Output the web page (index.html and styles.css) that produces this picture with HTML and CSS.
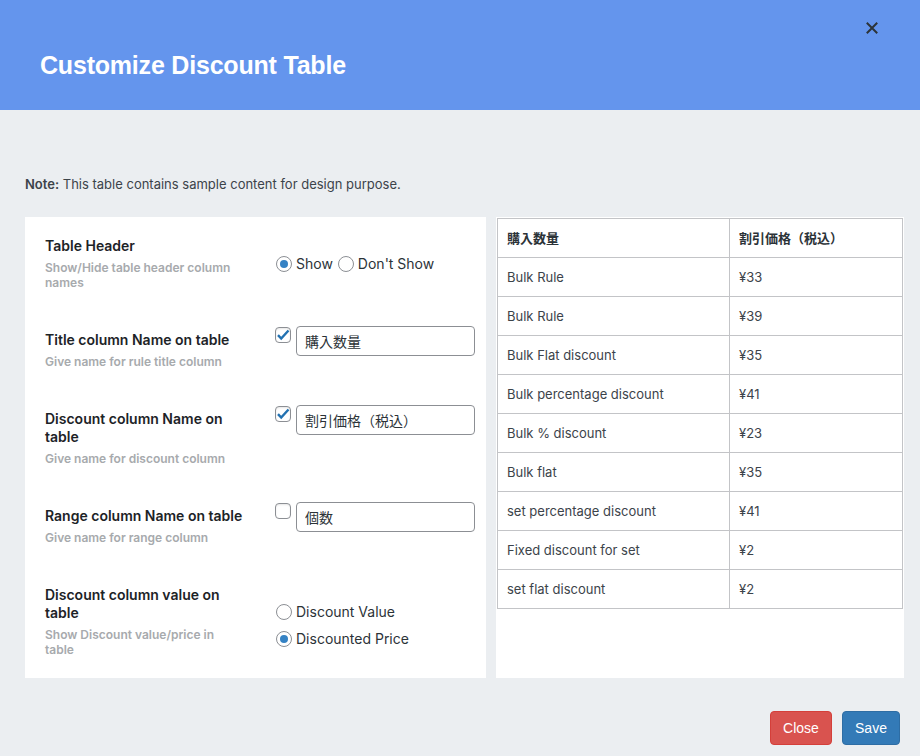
FILE: index.html
```html
<!DOCTYPE html>
<html lang="en">
<head>
<meta charset="utf-8">
<title>Customize Discount Table</title>
<link rel="stylesheet" href="styles.css">
</head>
<body>
<div class="modal">
  <header class="modal-header">
    <h1 class="modal-title">Customize Discount Table</h1>
    <span class="close-x" aria-label="Close">
      <svg width="12" height="12" viewBox="0 0 12 12"><path d="M1.5 1.5L10.5 10.5M10.5 1.5L1.5 10.5" stroke="#2c3338" stroke-width="2" stroke-linecap="square"/></svg>
    </span>
  </header>
  <main class="modal-body">
    <p class="note"><strong>Note:</strong> This table contains sample content for design purpose.</p>
    <div class="panels">
      <section class="settings">
        <div class="row row-center">
          <div class="label-col">
            <div class="label">Table Header</div>
            <div class="desc">Show/Hide table header column names</div>
          </div>
          <div class="control-col">
            <span class="choice"><span class="radio checked"></span>Show</span>
            <span class="choice"><span class="radio"></span>Don't Show</span>
          </div>
        </div>
        <div class="row row-top">
          <div class="label-col">
            <div class="label">Title column Name on table</div>
            <div class="desc">Give name for rule title column</div>
          </div>
          <div class="control-col field">
            <span class="checkbox checked"><svg width="14" height="12" viewBox="0 0 14 12"><path d="M2 6.2l3.2 3.3L12.5 1.5" fill="none" stroke="#2271b1" stroke-width="2.4"/></svg></span>
            <input class="text-input" type="text" value="購入数量">
          </div>
        </div>
        <div class="row row-top">
          <div class="label-col">
            <div class="label">Discount column Name on table</div>
            <div class="desc">Give name for discount column</div>
          </div>
          <div class="control-col field">
            <span class="checkbox checked"><svg width="14" height="12" viewBox="0 0 14 12"><path d="M2 6.2l3.2 3.3L12.5 1.5" fill="none" stroke="#2271b1" stroke-width="2.4"/></svg></span>
            <input class="text-input" type="text" value="割引価格（税込）">
          </div>
        </div>
        <div class="row row-top">
          <div class="label-col">
            <div class="label">Range column Name on table</div>
            <div class="desc">Give name for range column</div>
          </div>
          <div class="control-col field">
            <span class="checkbox"></span>
            <input class="text-input" type="text" value="個数">
          </div>
        </div>
        <div class="row row-center">
          <div class="label-col">
            <div class="label">Discount column value on table</div>
            <div class="desc">Show Discount value/price in table</div>
          </div>
          <div class="control-col stack">
            <span class="choice"><span class="radio"></span>Discount Value</span>
            <span class="choice"><span class="radio checked"></span>Discounted Price</span>
          </div>
        </div>
      </section>
      <section class="preview">
        <table class="discount-table">
          <thead>
            <tr><th>購入数量</th><th>割引価格（税込）</th></tr>
          </thead>
          <tbody>
            <tr><td>Bulk Rule</td><td>¥33</td></tr>
            <tr><td>Bulk Rule</td><td>¥39</td></tr>
            <tr><td>Bulk Flat discount</td><td>¥35</td></tr>
            <tr><td>Bulk percentage discount</td><td>¥41</td></tr>
            <tr><td>Bulk % discount</td><td>¥23</td></tr>
            <tr><td>Bulk flat</td><td>¥35</td></tr>
            <tr><td>set percentage discount</td><td>¥41</td></tr>
            <tr><td>Fixed discount for set</td><td>¥2</td></tr>
            <tr><td>set flat discount</td><td>¥2</td></tr>
          </tbody>
        </table>
      </section>
    </div>
  </main>
  <footer class="modal-footer">
    <button class="btn btn-close" type="button">Close</button>
    <button class="btn btn-save" type="button">Save</button>
  </footer>
</div>
</body>
</html>
```

FILE: styles.css
```css
* { box-sizing: border-box; }
html, body { margin: 0; padding: 0; }
body {
  background: #ebeef1;
  font-family: "Inter", "Noto Sans CJK JP", sans-serif;
  color: #3c434a;
  font-size: 13px;
  width: 920px;
  height: 756px;
  overflow: hidden;
}
.modal { width: 920px; height: 756px; display: flex; flex-direction: column; }

.modal-header {
  height: 110px;
  background: #6495ed;
  position: relative;
  display: flex;
  align-items: center;
  padding-left: 40px;
  padding-top: 21px;
}
.modal-title {
  margin: 0;
  font-family: "Liberation Sans", Arial, sans-serif;
  font-weight: 700;
  font-size: 25px;
  letter-spacing: -0.2px;
  color: #fff;
}
.close-x {
  position: absolute;
  top: 22px;
  left: 866px;
  width: 12px;
  height: 12px;
  display: block;
}
.close-x svg { display: block; }

.modal-body { padding: 0 16px 0 25px; }
.note {
  margin: 65px 0 24px;
  line-height: 18px;
  font-size: 13px;
  color: #3c434a;
}
.note strong { font-weight: 600; }

.panels { display: flex; gap: 10px; align-items: stretch; }
.settings {
  width: 461px;
  background: #fff;
  padding: 20px 11px 21px 20px;
}
.preview {
  width: 408px;
  background: #fff;
  padding: 1px;
}

.row { display: flex; }
.row + .row { margin-top: 41px; }
.row-center { align-items: center; }
.row-top { align-items: flex-start; }
.label-col { width: 230px; padding-right: 24px; }
.label {
  font-size: 14px;
  font-weight: 600;
  line-height: 18px;
  color: #1d2327;
}
.desc {
  margin-top: 5px;
  max-width: 192px;
  font-size: 12px;
  font-weight: 600;
  line-height: 15px;
  color: #a7aaad;
}
.control-col { width: 200px; display: flex; align-items: center; }
.control-col.field { margin-top: -5px; gap: 5px; align-items: flex-start; }
.control-col.stack { flex-direction: column; align-items: flex-start; gap: 9px; padding-top: 7px; }

.choice {
  display: inline-flex;
  align-items: center;
  font-size: 14px;
  line-height: 18px;
  color: #2c3338;
  margin-right: 4px;
}
.radio {
  width: 16px;
  height: 16px;
  border: 1px solid #8c8f94;
  border-radius: 50%;
  background: #fff;
  margin: 0 4px 0 1px;
  display: inline-flex;
  align-items: center;
  justify-content: center;
  flex: none;
}
.radio.checked::after {
  content: "";
  width: 8px;
  height: 8px;
  border-radius: 50%;
  background: #3582c4;
}
.checkbox {
  width: 16px;
  height: 16px;
  margin-top: 1px;
  border: 1px solid #8c8f94;
  border-radius: 4px;
  background: #fff;
  flex: none;
  display: flex;
  align-items: center;
  justify-content: center;
  box-shadow: inset 0 1px 2px rgba(0,0,0,0.1);
}
.checkbox svg { display: block; margin-top: -1px; }
.text-input {
  width: 179px;
  height: 30px;
  border: 1px solid #8c8f94;
  border-radius: 4px;
  padding: 0 8px;
  font-family: "Inter", "Noto Sans CJK JP", sans-serif;
  font-size: 14px;
  color: #2c3338;
  background: #fff;
  outline: none;
}

.discount-table {
  width: 406px;
  border-collapse: collapse;
  table-layout: fixed;
  border: 1px solid #c3c4c7;
}
.discount-table th, .discount-table td {
  height: 39px;
  border: 1px solid #c3c4c7;
  padding: 0 9px;
  text-align: left;
  font-size: 13px;
  line-height: 18px;
  color: #3c434a;
}
.discount-table th:first-child, .discount-table td:first-child { width: 232px; }
.discount-table th { font-weight: 600; color: #2c3338; }

.modal-footer {
  display: flex;
  justify-content: flex-end;
  gap: 10px;
  padding: 33px 20px 0 0;
}
.btn {
  height: 34px;
  padding: 0 12px;
  border-radius: 4px;
  font-family: "Liberation Sans", Arial, sans-serif;
  font-size: 14px;
  color: #fff;
  cursor: pointer;
}
.btn-close { background: #d9534f; border: 1px solid #d43f3a; width: 62px; }
.btn-save { background: #337ab7; border: 1px solid #2e6da4; width: 58px; }
```
